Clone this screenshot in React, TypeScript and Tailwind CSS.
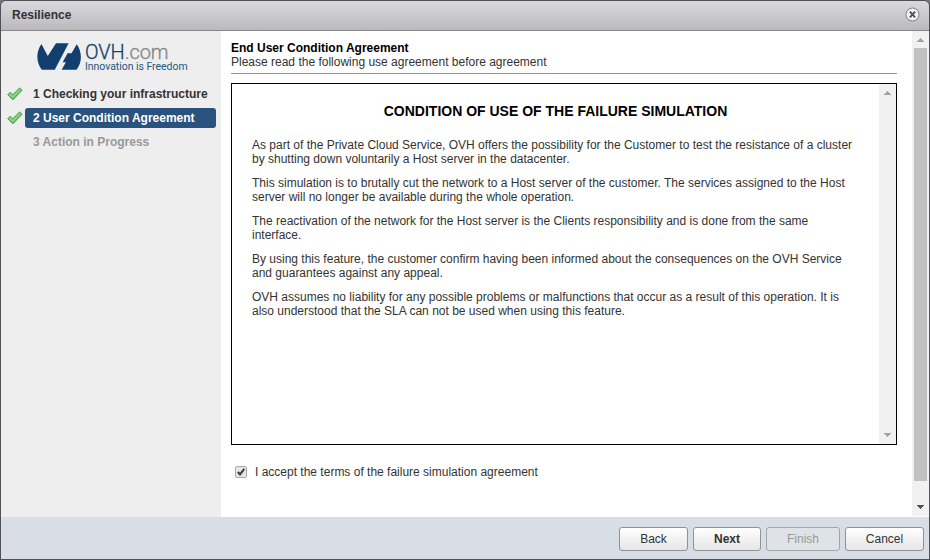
const paragraphs: string[][] = [
  [
    'As part of the Private Cloud Service, OVH offers the possibility for the Customer to test the resistance of a cluster',
    'by shutting down voluntarily a Host server in the datacenter.',
  ],
  [
    'This simulation is to brutally cut the network to a Host server of the customer. The services assigned to the Host',
    'server will no longer be available during the whole operation.',
  ],
  [
    'The reactivation of the network for the Host server is the Clients responsibility and is done from the same',
    'interface.',
  ],
  [
    'By using this feature, the customer confirm having been informed about the consequences on the OVH Service',
    'and guarantees against any appeal.',
  ],
  [
    'OVH assumes no liability for any possible problems or malfunctions that occur as a result of this operation. It is',
    'also understood that the SLA can not be used when using this feature.',
  ],
];

function Logo() {
  return (
    <div className="flex h-[43px] items-start pl-9 pt-[11px]">
      <svg width="45" height="30" viewBox="0 0 45 30" className="shrink-0">
        <path
          fill="#123f6d"
          d="M4.4 2L10.8 14L19 1.3H31.6L17.8 27.7H4.8C-.9 20.5-1.2 10 4.4 2ZM39.8 2.2C45.3 10 45.3 20.5 39.5 27.7H24.6L28.9 20.2H25.6L30.6 11.3H34.5Z"
        />
      </svg>
      <div className="whitespace-nowrap pl-[3px] font-[Roboto,sans-serif] text-[#123f6d]">
        <div className="h-[18px] text-[20px] font-light leading-[21px] tracking-[-0.05px]">
          <span className="[-webkit-text-stroke:0.3px_#123f6d]">OVH</span>
          <span className="text-[#858585] [-webkit-text-stroke:0.3px_#858585]">.com</span>
        </div>
        <div className="text-[10.5px] leading-[14px] tracking-[-0.04px] text-[#285780]">Innovation is Freedom</div>
      </div>
    </div>
  );
}

function GreenCheck() {
  return (
    <svg width="16" height="14" viewBox="0 0 16 14" className="shrink-0">
      <path d="M.7 7.7L3.2 5.2L5.8 7.7L12.6.9L15.1 3.2L5.9 12.9Z" fill="#70c56f" stroke="#4d9e4f" strokeLinejoin="round" />
      <path d="M2.6 6.9L5.8 10L13 2.6" fill="none" stroke="#94d98f" strokeWidth="1.2" />
    </svg>
  );
}

function Arrow({ down = false, color }: { down?: boolean; color: string }) {
  return (
    <svg width="8" height="4" viewBox="0 0 8 4" shapeRendering="crispEdges" fill={color}>
      <path d={down ? 'M0 0H7V1H6V2H5V3H4V4H3V3H2V2H1V1H0Z' : 'M0 4H7V3H6V2H5V1H4V0H3V1H2V2H1V3H0Z'} />
    </svg>
  );
}

function Step({ label, state }: { label: string; state: 'done' | 'active' | 'todo' }) {
  const tone =
    state === 'active' ? 'bg-[#29537e] text-white' : state === 'done' ? 'text-[#333]' : 'text-[#999]';
  return (
    <li className="flex h-6 items-center pl-1.5">
      <span className="w-[18px]">{state !== 'todo' && <GreenCheck />}</span>
      <span className={'h-5 w-[191px] whitespace-nowrap rounded-[3px] pl-2 leading-[21px] ' + tone}>{label}</span>
    </li>
  );
}

function Button({ label, look }: { label: string; look: string }) {
  return (
    <button className={'h-6 rounded-[3px] border text-center leading-[22px] ' + look}>{label}</button>
  );
}

const normal = 'border-[#929292] bg-linear-to-b from-white to-[#e6e6e6] text-[#333] ';

export default function App() {
  return (
    <div className="h-[560px] w-[930px] bg-[#77767a] font-['Liberation_Sans',Arial,sans-serif] text-[12px] leading-[14px] text-[#333]">
      <div className="flex h-full flex-col overflow-hidden rounded-t-md border border-[#505055]">
        <header className="flex h-[30px] shrink-0 items-center justify-between border-b border-[#868686] bg-linear-to-b from-[#dadade] to-[#b9b9be] pl-[11px] pr-[9px]">
          <h1 className="pb-[2px] font-bold">Resilience</h1>
          <svg width="15" height="15" viewBox="0 0 15 15" className="mb-[2px]">
            <circle cx="7.5" cy="7.5" r="6.5" fill="#f2f2f2" stroke="#828286" />
            <path d="M4.9 4.6L10.1 10.4M10.1 4.6L4.9 10.4" stroke="#505055" strokeWidth="1.9" />
          </svg>
        </header>

        <div className="flex h-[486px] shrink-0">
          <aside className="w-[220px] shrink-0 bg-[#eee]">
            <Logo />
            <ol className="mt-[8px] font-bold">
              <Step label="1 Checking your infrastructure" state="done" />
              <Step label="2 User Condition Agreement" state="active" />
              <Step label="3 Action in Progress" state="todo" />
            </ol>
          </aside>

          <main className="flex w-[691px] shrink-0 flex-col bg-white pl-[10px] pr-[15px] pt-[10px]">
            <div className="h-[33px] border-b border-[#929292]">
              <h2 className="font-bold text-black">End User Condition Agreement</h2>
              <p>Please read the following use agreement before agreement</p>
            </div>

            <section className="mt-[9px] flex h-[362px] border border-black">
              <article className="w-[647px] pl-5 pt-[20px]">
                <h3 className="mb-[20px] h-[14px] whitespace-nowrap pr-[20px] text-center text-[14px] font-bold text-black">
                  CONDITION OF USE OF THE FAILURE SIMULATION
                </h3>
                {paragraphs.map((lines) => (
                  <p key={lines[0]} className="mb-[10px]">
                    {lines.map((line) => (
                      <span key={line} className="block whitespace-nowrap">{line}</span>
                    ))}
                  </p>
                ))}
              </article>
              <div className="flex w-[17px] flex-col items-center justify-between bg-[#f1f1f1] py-[7px]">
                <Arrow color="#a3a3a3" />
                <Arrow down color="#a3a3a3" />
              </div>
            </section>

            <label className="mt-[20px] flex items-center pl-1">
              <svg width="12" height="12" viewBox="0 0 12 12">
                <rect x=".5" y=".5" width="11" height="11" rx="1.5" fill="#e6e6e6" stroke="#a9a9a9" />
                <path d="M2.8 6L5 8.3L9.3 2.8" fill="none" stroke="#404040" strokeWidth="2.1" />
              </svg>
              <span className="ml-2">I accept the terms of the failure simulation agreement</span>
            </label>
          </main>

          <div className="flex w-[17px] shrink-0 flex-col items-center border-b border-white bg-[#f1f1f1] pt-[7px]">
            <Arrow color="#a3a3a3" />
            <div className="mt-[6px] h-[433px] w-[13px] bg-[#c1c1c1]" />
            <div className="mt-[24px]">
              <Arrow down color="#505050" />
            </div>
          </div>
        </div>

        <footer className="flex flex-1 items-start justify-end gap-[5px] bg-[#d9dee6] pr-[5px] pt-[10px]">
          <Button label="Back" look={normal + 'w-[69px]'} />
          <Button label="Next" look={normal + 'w-[68px] font-bold'} />
          <Button label="Finish" look="w-[74px] border-[#a2a5aa] bg-[#dfe3e8] text-[#999]" />
          <Button label="Cancel" look={normal + 'w-[79px]'} />
        </footer>
      </div>
    </div>
  );
}
